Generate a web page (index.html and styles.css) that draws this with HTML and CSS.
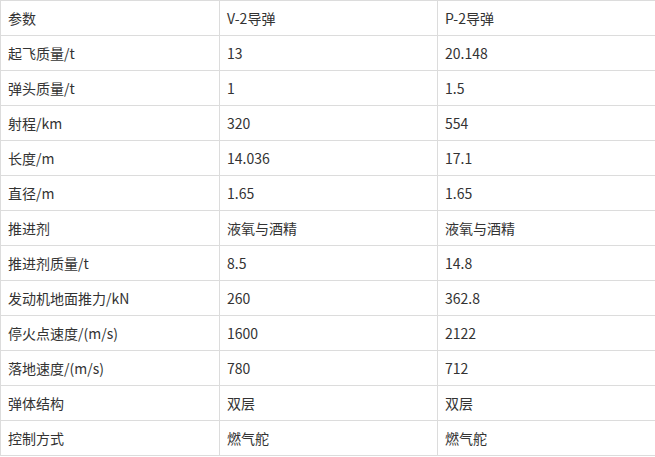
FILE: index.html
```html
<!DOCTYPE html>
<html lang="zh-CN">
<head>
<meta charset="utf-8">
<title>V-2 与 P-2 导弹参数</title>
<link rel="stylesheet" href="styles.css">
</head>
<body>
<table class="spec">
  <tbody>
    <tr><td>参数</td><td>V-2导弹</td><td>P-2导弹</td></tr>
    <tr><td>起飞质量/t</td><td>13</td><td>20.148</td></tr>
    <tr><td>弹头质量/t</td><td>1</td><td>1.5</td></tr>
    <tr><td>射程/km</td><td>320</td><td>554</td></tr>
    <tr><td>长度/m</td><td>14.036</td><td>17.1</td></tr>
    <tr><td>直径/m</td><td>1.65</td><td>1.65</td></tr>
    <tr><td>推进剂</td><td>液氧与酒精</td><td>液氧与酒精</td></tr>
    <tr><td>推进剂质量/t</td><td>8.5</td><td>14.8</td></tr>
    <tr><td>发动机地面推力/kN</td><td>260</td><td>362.8</td></tr>
    <tr><td>停火点速度/(m/s)</td><td>1600</td><td>2122</td></tr>
    <tr><td>落地速度/(m/s)</td><td>780</td><td>712</td></tr>
    <tr><td>弹体结构</td><td>双层</td><td>双层</td></tr>
    <tr><td>控制方式</td><td>燃气舵</td><td>燃气舵</td></tr>
  </tbody>
</table>
</body>
</html>
```
FILE: styles.css
```css
html, body {
  margin: 0;
  padding: 0;
  background: #fff;
  overflow: hidden;
}
.spec {
  border-collapse: collapse;
  table-layout: fixed;
  width: 657px;
  font-family: "Noto Sans CJK SC", "Noto Sans", sans-serif;
  font-size: 14px;
  color: #333;
}
.spec td {
  border: 1px solid #dcdcdc;
  height: 35px;
  padding: 0 7px;
  box-sizing: border-box;
  vertical-align: middle;
  white-space: nowrap;
}
.spec td:nth-child(1) { width: 219px; }
.spec td:nth-child(2) { width: 218px; }
.spec td:nth-child(3) { width: 220px; }
```
